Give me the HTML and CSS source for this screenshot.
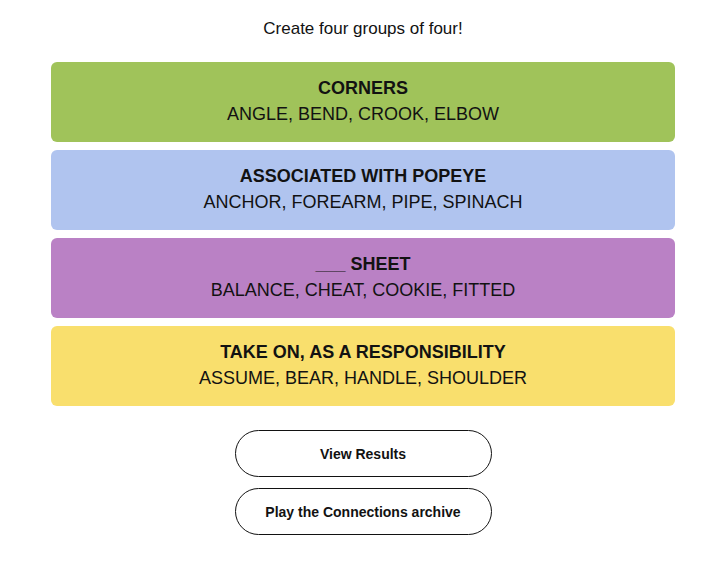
FILE: index.html
```html
<!DOCTYPE html>
<html>
<head>
<meta charset="utf-8">
<link rel="stylesheet" href="styles.css">
</head>
<body>
<div class="page">
  <p class="intro">Create four groups of four!</p>
  <div class="groups">
    <div class="group green">
      <div class="g-title">CORNERS</div>
      <div class="g-words">ANGLE, BEND, CROOK, ELBOW</div>
    </div>
    <div class="group blue">
      <div class="g-title">ASSOCIATED WITH POPEYE</div>
      <div class="g-words">ANCHOR, FOREARM, PIPE, SPINACH</div>
    </div>
    <div class="group purple">
      <div class="g-title">___ SHEET</div>
      <div class="g-words">BALANCE, CHEAT, COOKIE, FITTED</div>
    </div>
    <div class="group yellow">
      <div class="g-title">TAKE ON, AS A RESPONSIBILITY</div>
      <div class="g-words">ASSUME, BEAR, HANDLE, SHOULDER</div>
    </div>
  </div>
  <div class="actions">
    <button class="pill">View Results</button>
    <button class="pill">Play the Connections archive</button>
  </div>
</div>
</body>
</html>
```
FILE: styles.css
```css
* { box-sizing: border-box; }
html, body { margin: 0; padding: 0; background: #fff; }
body { font-family: "Liberation Sans", Arial, sans-serif; color: #121212; }
.page { width: 624px; margin: 0 0 0 51px; display: flex; flex-direction: column; align-items: center; }
.intro { margin: 19px 0 0; font-size: 17px; line-height: 20px; height: 20px; }
.groups { width: 100%; margin-top: 23px; display: flex; flex-direction: column; gap: 8px; }
.group { height: 80px; border-radius: 6px; display: flex; flex-direction: column; align-items: center; justify-content: center; text-align: center; padding-bottom: 1px; }
.g-title { font-weight: bold; font-size: 18px; line-height: 25px; margin-bottom: 1px; }
.g-words { font-size: 18px; line-height: 25px; }
.green { background: #a0c35a; }
.blue { background: #b0c4ef; }
.purple { background: #ba81c5; }
.yellow { background: #f9df6d; }
.actions { margin-top: 24px; display: flex; flex-direction: column; gap: 11px; align-items: center; }
.pill { width: 257px; height: 47px; border: 1px solid #121212; border-radius: 24px; background: #fff; font-family: "Liberation Sans", Arial, sans-serif; font-weight: bold; font-size: 14px; color: #121212; padding: 0; }
```
